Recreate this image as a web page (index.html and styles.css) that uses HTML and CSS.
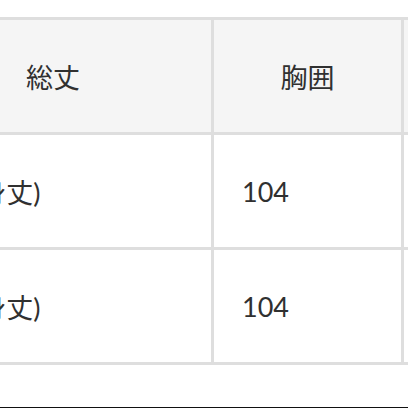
FILE: index.html
```html
<!DOCTYPE html>
<html lang="ja">
<head>
<meta charset="utf-8">
<link rel="stylesheet" href="styles.css">
</head>
<body>
<div class="page">
  <div class="scroller">
    <table class="size-table">
      <thead>
        <tr>
          <th class="c1">総丈</th>
          <th class="c2">胸囲</th>
          <th class="c3"></th>
        </tr>
      </thead>
      <tbody>
        <tr>
          <td class="c1">総丈(身丈)</td>
          <td class="c2">104</td>
          <td class="c3"></td>
        </tr>
        <tr>
          <td class="c1">総丈(身丈)</td>
          <td class="c2">104</td>
          <td class="c3"></td>
        </tr>
      </tbody>
    </table>
  </div>
  <div class="bottom-rule"></div>
</div>
</body>
</html>
```
FILE: styles.css
```css
html, body {
  margin: 0;
  padding: 0;
  background: #ffffff;
}

.page {
  width: 408px;
  height: 408px;
  display: flex;
  flex-direction: column;
  overflow: hidden;
}

.scroller {
  padding-top: 17px;
  overflow: hidden;
}

.size-table {
  border-collapse: separate;
  border-spacing: 0;
  margin-left: -105px;
  width: 699px;
  table-layout: fixed;
  font-family: Lato, "Noto Sans CJK JP", sans-serif;
  font-size: 27px;
  color: #303030;
}

.size-table th,
.size-table td {
  height: 112px;
  padding: 0;
  border-right: 3px solid #dedede;
  border-bottom: 3px solid #dedede;
  vertical-align: middle;
  box-sizing: content-box;
  white-space: nowrap;
}

.size-table th {
  border-top: 3px solid #dedede;
  background: #f5f5f5;
  font-weight: normal;
  text-align: center;
}

.size-table td {
  background: #ffffff;
  text-align: left;
}

.c1 { width: 316px; }
.c2 { width: 187px; }
.c3 { width: 187px; }

td.c1 { padding-left: 23px; width: 293px; }
td.c2 { padding-left: 28px; width: 159px; }
td.c3 { padding-left: 28px; width: 159px; }

.c1-tail { letter-spacing: -1px; }

.bottom-rule {
  margin-top: auto;
  height: 1px;
  background: #111111;
}
```
